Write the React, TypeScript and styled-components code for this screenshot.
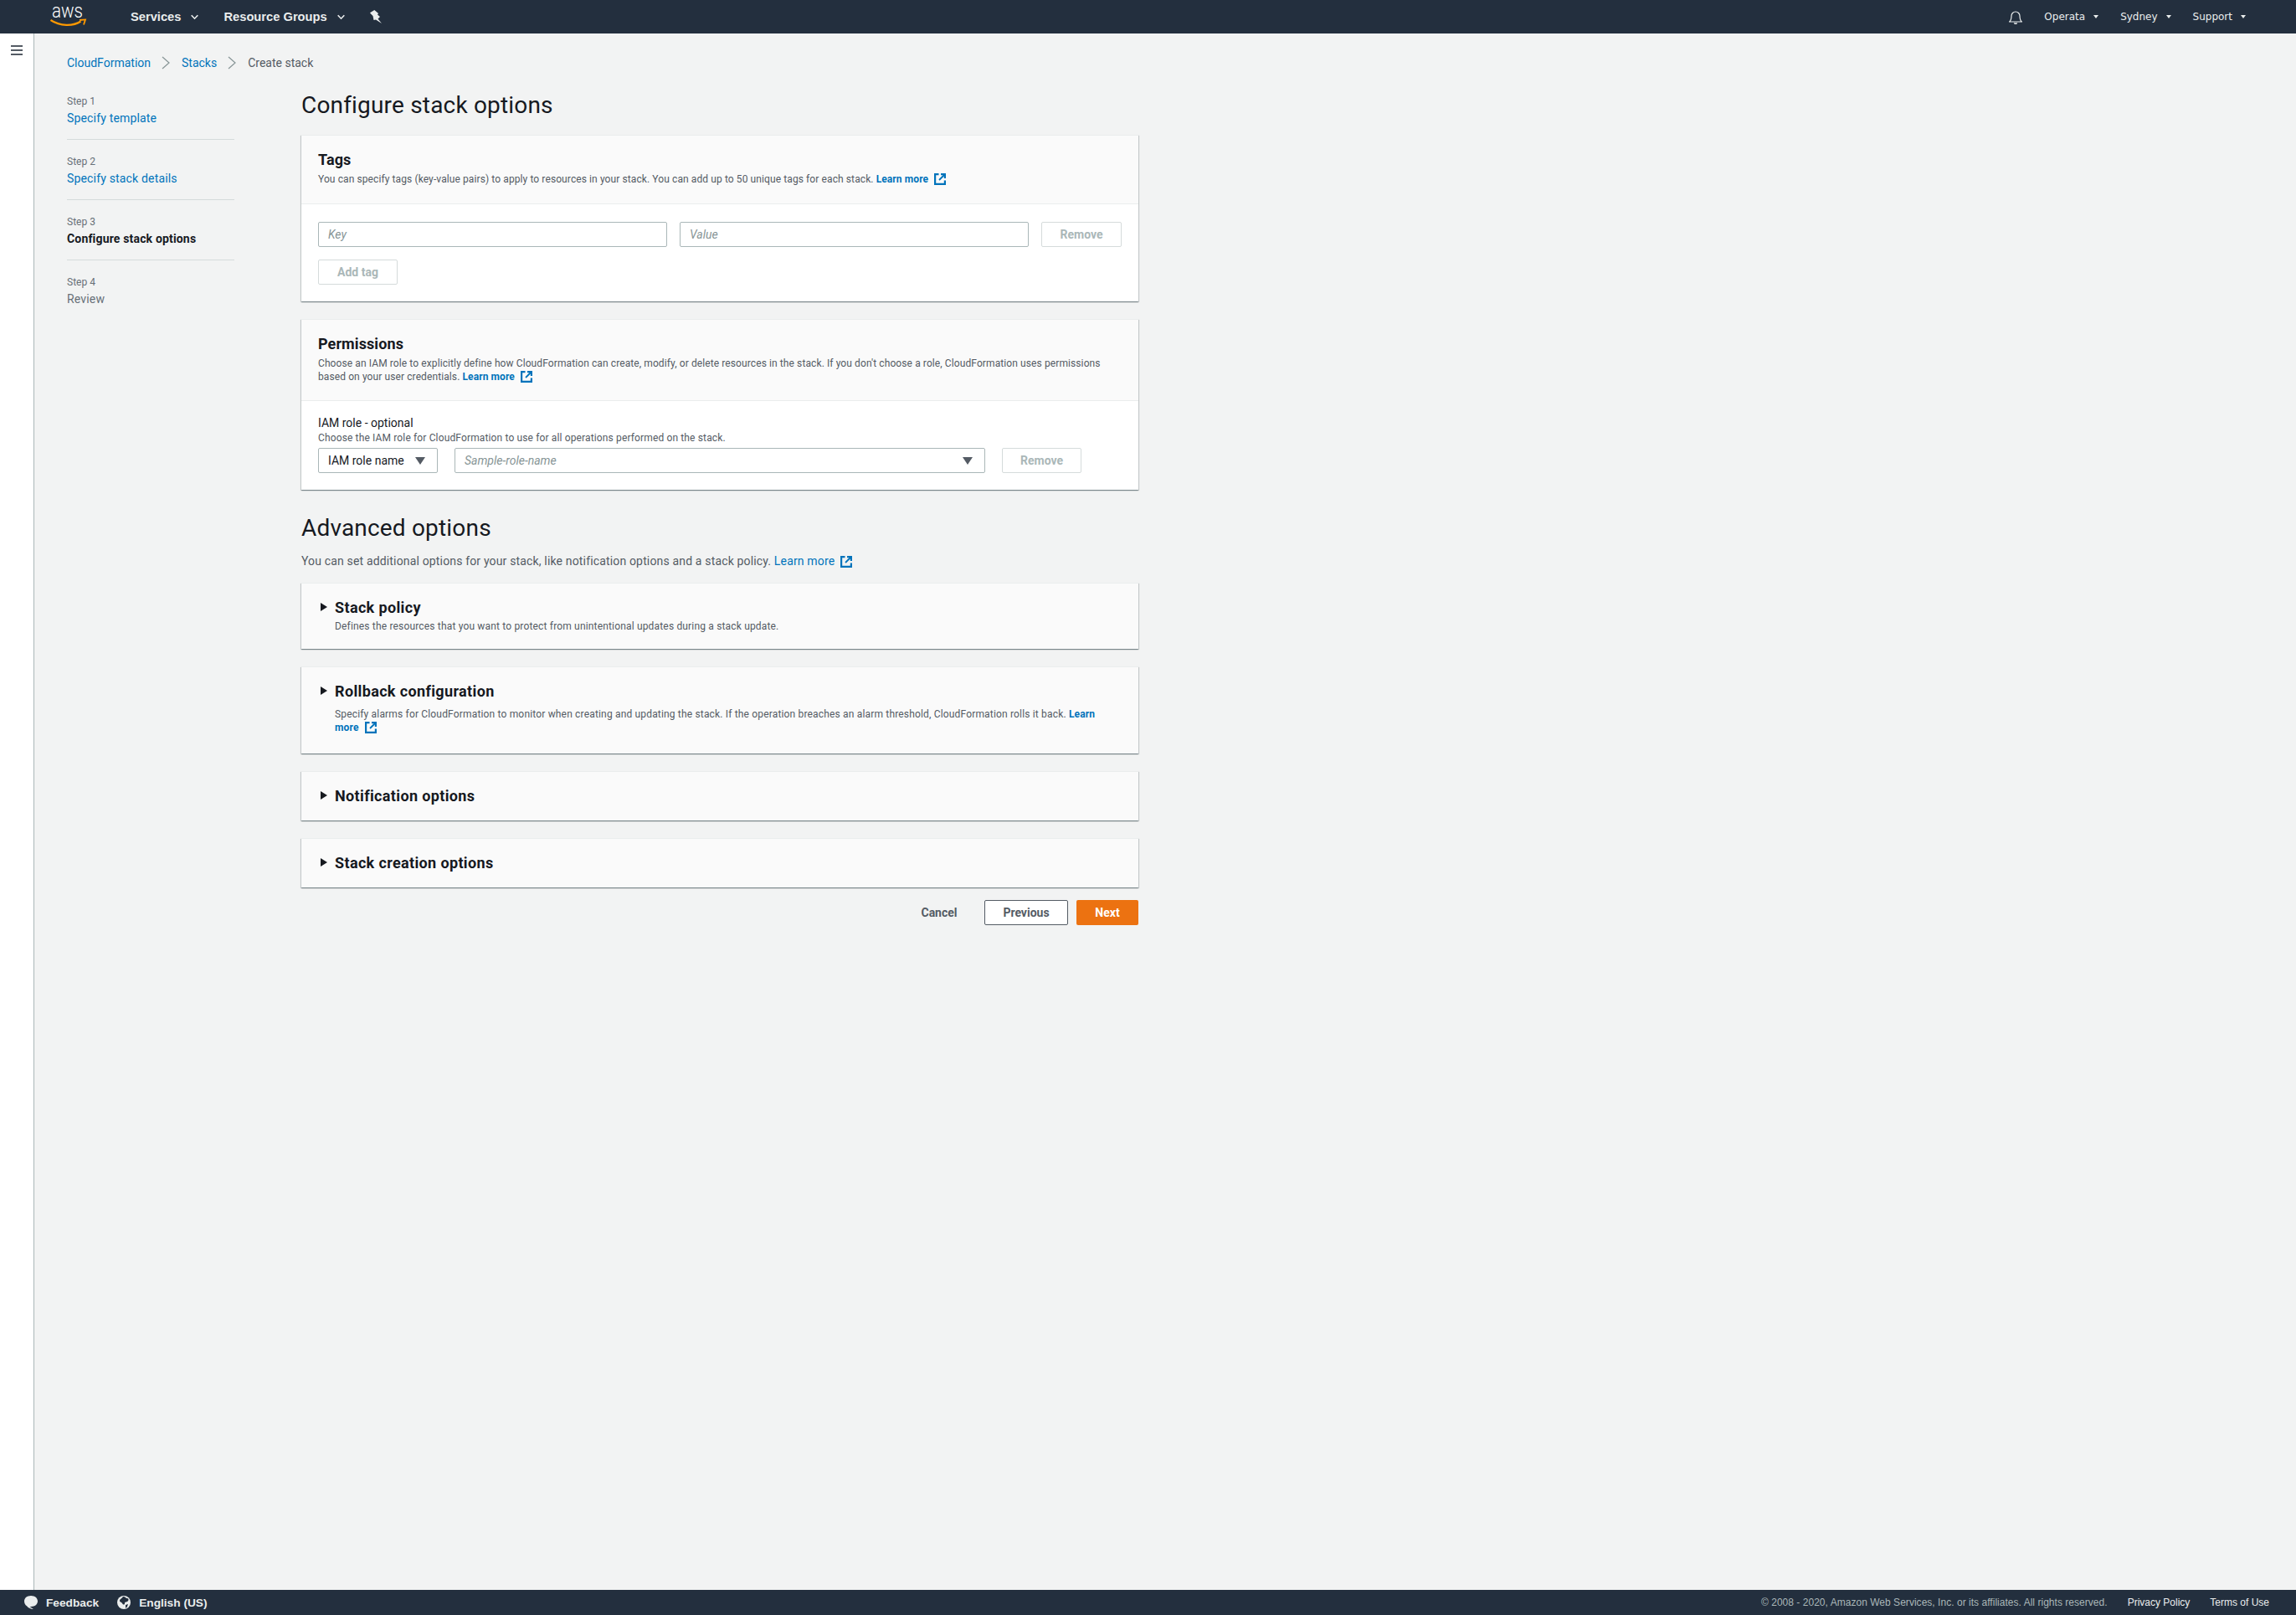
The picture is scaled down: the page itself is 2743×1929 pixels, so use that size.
import React from "react";
import styled, { createGlobalStyle } from "styled-components";

const FONT = `"Roboto", "Liberation Sans", sans-serif`;
const Global = createGlobalStyle`
  html, body { margin: 0; padding: 0; height: 100%; }
  body { font-family: ${FONT}; background: #f2f3f3; color: #16191f; }
  #root { height: 100%; }
  * { box-sizing: border-box; }
`;

const Page = styled.div`
  display: flex; flex-direction: column; height: 1929px; overflow: hidden;
`;
const TopBar = styled.header`
  flex: 0 0 40px; background: #232f3e; display: flex; align-items: center; color: #fff;
  font-family: "Liberation Sans", sans-serif; padding-left: 60px; padding-right: 60px;
`;
const LogoWrap = styled.div`
  width: 96px; height: 40px; display: flex; align-items: flex-start;
`;
const NavMenu = styled.div`
  display: flex; align-items: center; font-size: 14.7px; font-weight: 700; color: #eaeded; margin-right: 30px;
`;
const NavCaret = styled.svg`
  margin-left: 12px; width: 9px; height: 7px;
`;
const Spacer = styled.div`flex: 1;`;
const RightMenu = styled.div`
  display: flex; align-items: center; font-family: "DejaVu Sans", sans-serif; font-size: 12px; color: #eaeded; margin-left: 26px;
`;
const SmallCaret = styled.span`
  margin-left: 10px; width: 0; height: 0; border-left: 3.5px solid transparent; border-right: 3.5px solid transparent; border-top: 4px solid #eaeded;
`;
const Body = styled.div`flex: 1; display: flex; min-height: 0;`;
const Rail = styled.aside`
  flex: 0 0 41px; background: #fff; border-right: 1px solid #aab7b8; padding: 14px 0 0 13px;
`;
const Burger = styled.svg`display: block; width: 14px; height: 12px;`;
const Content = styled.main`flex: 1; padding: 26px 0 0 39px; min-width: 0;`;
const Crumbs = styled.nav`
  height: 18px; display: flex; align-items: center; font-size: 14px; color: #545b64; margin-bottom: 24px;
`;
const A = styled.a<{ $bold?: boolean }>`
  color: #0073bb; text-decoration: none; font-weight: ${(p) => (p.$bold ? 700 : 400)};
`;
const CrumbSep = styled.svg`width: 10px; height: 16px; margin: 0 14px 0 13px;`;
const Columns = styled.div`display: flex; align-items: flex-start;`;
const Steps = styled.ol`
  list-style: none; margin: 5px 80px 0 0; padding: 0; width: 200px; flex: none;
`;
const Step = styled.li`
  padding-bottom: 15px; margin-bottom: 18px; border-bottom: 1px solid #d5dbdb;
  &:last-child { border-bottom: 0; }
`;
const StepNum = styled.div`font-size: 12px; line-height: 16px; color: #687078; margin-bottom: 2px;`;
const StepName = styled.div<{ $kind: "link" | "current" | "off" }>`
  font-size: 14px; line-height: 20px; letter-spacing: .17px;
  color: ${(p) => (p.$kind === "link" ? "#0073bb" : p.$kind === "current" ? "#16191f" : "#687078")};
  font-weight: ${(p) => (p.$kind === "current" ? 700 : 400)};
`;
const Main = styled.div`width: 1000px; flex: none;`;
const H1 = styled.h1`
  margin: 0 0 17px; font-size: 28px; line-height: 36px; font-weight: 400; color: #16191f; letter-spacing: .18px;
`;
const Card = styled.section<{ $gap?: number }>`
  background: #fff; box-shadow: 0 1px 1px 0 rgba(0,28,36,.3), 1px 1px 1px 0 rgba(0,28,36,.15), -1px 1px 1px 0 rgba(0,28,36,.15);
  border-top: 1px solid #eaeded; margin-bottom: ${(p) => p.$gap ?? 21}px;
`;
const CardHead = styled.div<{ $h: number }>`
  background: #fafafa; border-bottom: 1px solid #eaeded; height: ${(p) => p.$h}px; padding: 18px 20px 0;
`;
const CardTitle = styled.h2`
  margin: 0 0 4px; font-size: 18px; line-height: 22px; font-weight: 700; color: #16191f; letter-spacing: .1px;
`;
const Desc = styled.p<{ $top?: number }>`
  margin: ${(p) => p.$top ?? 0}px 0 0; font-size: 12px; line-height: 16px; color: #545b64; letter-spacing: .1px;
`;
const ExpandDesc = styled(Desc)`letter-spacing: .17px;`;
const Ext = styled.svg`
  width: 14px; height: 14px; vertical-align: -2.500px; margin-left: 7px;
`;
const CardBody = styled.div`padding: 21px 20px 20px;`;
const Row = styled.div<{ $gap: number }>`display: flex; gap: ${(p) => p.$gap}px;`;
const Input = styled.div<{ $w: number }>`
  width: ${(p) => p.$w}px; height: 30px; border: 1px solid #aab7b8; border-radius: 2px; background: #fff;
  padding: 0 11px; display: flex; align-items: center; justify-content: space-between;
  font-size: 14px; font-style: italic; color: #879596;
`;
const SelectBox = styled(Input)`font-style: normal; color: #16191f;`;
const Caret = styled.span`
  width: 0; height: 0; border-left: 6px solid transparent; border-right: 6px solid transparent; border-top: 9px solid #545b64; margin-right: 3px;
`;
const DisabledBtn = styled.button<{ $w: number }>`
  width: ${(p) => p.$w}px; height: 30px; border: 1px solid #d5dbdb; border-radius: 2px; background: #fff;
  font: 700 14px ${FONT}; color: #aab7b8; padding: 0;
`;
const AddRow = styled.div`margin-top: 15px;`;
const Label = styled.div`font-size: 14px; line-height: 18px; color: #16191f; margin-top: -4px;`;
const SubLabel = styled.div`font-size: 12px; line-height: 16px; color: #545b64; margin-bottom: 4px; margin-top: 1px; letter-spacing: .14px;`;
const H2 = styled.h2`
  margin: 0; font-size: 28px; line-height: 36px; font-weight: 400; color: #16191f; padding-top: 7px; letter-spacing: .18px;
`;
const AdvDesc = styled.p`
  margin: 11px 0 16px; font-size: 14px; line-height: 20px; color: #545b64; letter-spacing: .16px;
`;
const Expand = styled(Card)<{ $h: number }>`
  height: ${(p) => p.$h}px; background: #fafafa; padding: 18px 20px 0; display: flex;
`;
const Tri = styled.span`
  flex: none; width: 0; height: 0; margin: 5px 9px 0 3px;
  border-top: 5.5px solid transparent; border-bottom: 5.5px solid transparent; border-left: 8px solid #16191f;
`;
const ExpandText = styled.div`flex: 1; padding-right: 14px;`;
const ExpandTitle = styled.h3`
  margin: 0; font-size: 18px; line-height: 22px; font-weight: 700; color: #16191f; letter-spacing: .36px;
`;
const Actions = styled.div`
  display: flex; justify-content: flex-end; align-items: center; margin-top: -6px;
`;
const BtnBase = styled.button`
  height: 30px; border-radius: 2px; font: 700 14px ${FONT}; padding: 0;
`;
const CancelBtn = styled(BtnBase)`width: 46px; border: 0; background: none; color: #545b64; margin-right: 31px;`;
const PrevBtn = styled(BtnBase)`width: 100px; border: 1px solid #545b64; background: #fff; color: #545b64; margin-right: 10px;`;
const NextBtn = styled(BtnBase)`width: 74px; border: 0; background: #ec7211; color: #fff;`;
const Footer = styled.footer`
  flex: 0 0 30px; background: #232f3e; display: flex; align-items: center; font-family: "Liberation Sans", sans-serif;
  font-size: 13.7px; padding: 0 32px 0 28px; color: #eaeded;
`;
const FootBold = styled.span`display: inline-flex; align-items: center; font-weight: 700; margin-right: 21px;`;
const FootIcon = styled.svg`width: 18px; height: 18px; margin-right: 9px;`;
const Copy = styled.span`font-size: 12px; color: #aab7b8; letter-spacing: .03px;`;
const FootLink = styled.span`font-size: 12px; color: #eaeded; margin-left: 24px;`;

const ExtLink = () => (
  <Ext viewBox="0 0 14 14" fill="none" stroke="#0073bb" strokeWidth="2.2">
    <path d="M5.500 1.100H1.100v11.800h11.800V8.500" /><path d="M8 1.100h4.900V6" /><path d="M12.500 1.500 6 8" strokeWidth="1.8" />
  </Ext>
);
const Learn = ({ bold = true }: { bold?: boolean }) => (
  <A $bold={bold} href="#">Learn more<ExtLink /></A>
);
const NavChevron = () => (
  <NavCaret viewBox="0 0 9 7" fill="none" stroke="#eaeded" strokeWidth="1.600"><path d="M.7 1.200l3.800 4 3.800-4" /></NavCaret>
);
const Sep = () => (
  <CrumbSep viewBox="0 0 10 16" fill="none" stroke="#879596" strokeWidth="1.2"><path d="M1 1l8 7-8 7" /></CrumbSep>
);

export default function App() {
  return (
    <Page>
      <Global />
      <TopBar>
        <LogoWrap>
          <svg width="44" height="34" viewBox="0 0 44 34">
            <text x="2" y="21" fontFamily="Roboto, sans-serif" fontSize="24" fontWeight="300" fill="#fff" textLength="37" lengthAdjust="spacingAndGlyphs">aws</text>
            <path d="M0.500 24c11 7.500 27 7.500 36 1.500" fill="none" stroke="#f90" strokeWidth="2.2" />
            <path d="M35 24l7-.6-2 6.100" fill="none" stroke="#f90" strokeWidth="1.800" />
          </svg>
        </LogoWrap>
        <NavMenu>Services<NavChevron /></NavMenu>
        <NavMenu>Resource Groups<NavChevron /></NavMenu>
        <svg width="14" height="16" viewBox="0 0 14 16"><path d="M5.300 0 10 4 9 5.500 12 8 9.500 10.500 14 16 7 11.500 4.500 12 3.500 7 1 4.500 0 3.300z" fill="#eaeded" /></svg>
        <Spacer />
        <svg width="16" height="17" viewBox="0 0 16 17" fill="none" stroke="#eaeded" strokeWidth="1.2"><path d="M.7 14c2-1.800 2.300-3.500 2.300-7a5 5 0 0 1 10 0c0 3.500.3 5.200 2.300 7z" /><path d="M6.300 15.500a1.800 1.300 0 0 0 3.400 0" fill="#eaeded" /></svg>
        <RightMenu>Operata<SmallCaret /></RightMenu>
        <RightMenu>Sydney<SmallCaret /></RightMenu>
        <RightMenu>Support<SmallCaret /></RightMenu>
      </TopBar>
      <Body>
        <Rail>
          <Burger viewBox="0 0 14 12" stroke="#545b64" strokeWidth="2"><path d="M0 1h14M0 6h14M0 11h14" /></Burger>
        </Rail>
        <Content>
          <Crumbs>
            <A href="#">CloudFormation</A><Sep /><A href="#">Stacks</A><Sep /><span>Create stack</span>
          </Crumbs>
          <Columns>
            <Steps>
              <Step><StepNum>Step 1</StepNum><StepName $kind="link">Specify template</StepName></Step>
              <Step><StepNum>Step 2</StepNum><StepName $kind="link">Specify stack details</StepName></Step>
              <Step><StepNum>Step 3</StepNum><StepName $kind="current">Configure stack options</StepName></Step>
              <Step><StepNum>Step 4</StepNum><StepName $kind="off">Review</StepName></Step>
            </Steps>
            <Main>
              <H1>Configure stack options</H1>
              <Card>
                <CardHead $h={82}>
                  <CardTitle>Tags</CardTitle>
                  <Desc>You can specify tags (key-value pairs) to apply to resources in your stack. You can add up to 50 unique tags for each stack. <Learn /></Desc>
                </CardHead>
                <CardBody>
                  <Row $gap={15}>
                    <Input $w={417}>Key</Input>
                    <Input $w={417}>Value</Input>
                    <DisabledBtn $w={96}>Remove</DisabledBtn>
                  </Row>
                  <AddRow><DisabledBtn $w={95}>Add tag</DisabledBtn></AddRow>
                </CardBody>
              </Card>
              <Card>
                <CardHead $h={97}>
                  <CardTitle>Permissions</CardTitle>
                  <Desc>Choose an IAM role to explicitly define how CloudFormation can create, modify, or delete resources in the stack. If you don't choose a role, CloudFormation uses permissions based on your user credentials. <Learn /></Desc>
                </CardHead>
                <CardBody>
                  <Label>IAM role - optional</Label>
                  <SubLabel>Choose the IAM role for CloudFormation to use for all operations performed on the stack.</SubLabel>
                  <Row $gap={20}>
                    <SelectBox $w={143}>IAM role name<Caret /></SelectBox>
                    <Input $w={634}>Sample-role-name<Caret /></Input>
                    <DisabledBtn $w={95}>Remove</DisabledBtn>
                  </Row>
                </CardBody>
              </Card>
              <H2>Advanced options</H2>
              <AdvDesc>You can set additional options for your stack, like notification options and a stack policy. <Learn bold={false} /></AdvDesc>
              <Expand $h={79}>
                <Tri />
                <ExpandText>
                  <ExpandTitle>Stack policy</ExpandTitle>
                  <ExpandDesc $top={3}>Defines the resources that you want to protect from unintentional updates during a stack update.</ExpandDesc>
                </ExpandText>
              </Expand>
              <Expand $h={104}>
                <Tri />
                <ExpandText>
                  <ExpandTitle>Rollback configuration</ExpandTitle>
                  <ExpandDesc $top={8}>Specify alarms for CloudFormation to monitor when creating and updating the stack. If the operation breaches an alarm threshold, CloudFormation rolls it back. <Learn /></ExpandDesc>
                </ExpandText>
              </Expand>
              <Expand $h={59}><Tri /><ExpandText><ExpandTitle>Notification options</ExpandTitle></ExpandText></Expand>
              <Expand $h={59}><Tri /><ExpandText><ExpandTitle>Stack creation options</ExpandTitle></ExpandText></Expand>
              <Actions>
                <CancelBtn>Cancel</CancelBtn>
                <PrevBtn>Previous</PrevBtn>
                <NextBtn>Next</NextBtn>
              </Actions>
            </Main>
          </Columns>
        </Content>
      </Body>
      <Footer>
        <FootBold>
          <FootIcon viewBox="0 0 18 18"><path d="M9 1c4.700 0 8 2.800 8 6.500S13.700 14 9 14c-.6 0-1 0-1.500-.1L12 17c-3 0-6-1-8-3.700C2 12 1 10 1 7.500 1 3.800 4.300 1 9 1z" fill="#eaeded" /></FootIcon>
          Feedback
        </FootBold>
        <FootBold>
          <FootIcon viewBox="0 0 18 18"><circle cx="9" cy="9" r="8" fill="#eaeded" /><path d="M8 2c3 0 3 2 5 2s2 3 0 4-3 0-3 2-2 2-3 0-3-1-3-3 2-2 4-5zM11 12l3-1-1 3-2 2z" fill="#232f3e" /></FootIcon>
          English (US)
        </FootBold>
        <Spacer />
        <Copy>© 2008 - 2020, Amazon Web Services, Inc. or its affiliates. All rights reserved.</Copy>
        <FootLink>Privacy Policy</FootLink>
        <FootLink>Terms of Use</FootLink>
      </Footer>
    </Page>
  );
}
